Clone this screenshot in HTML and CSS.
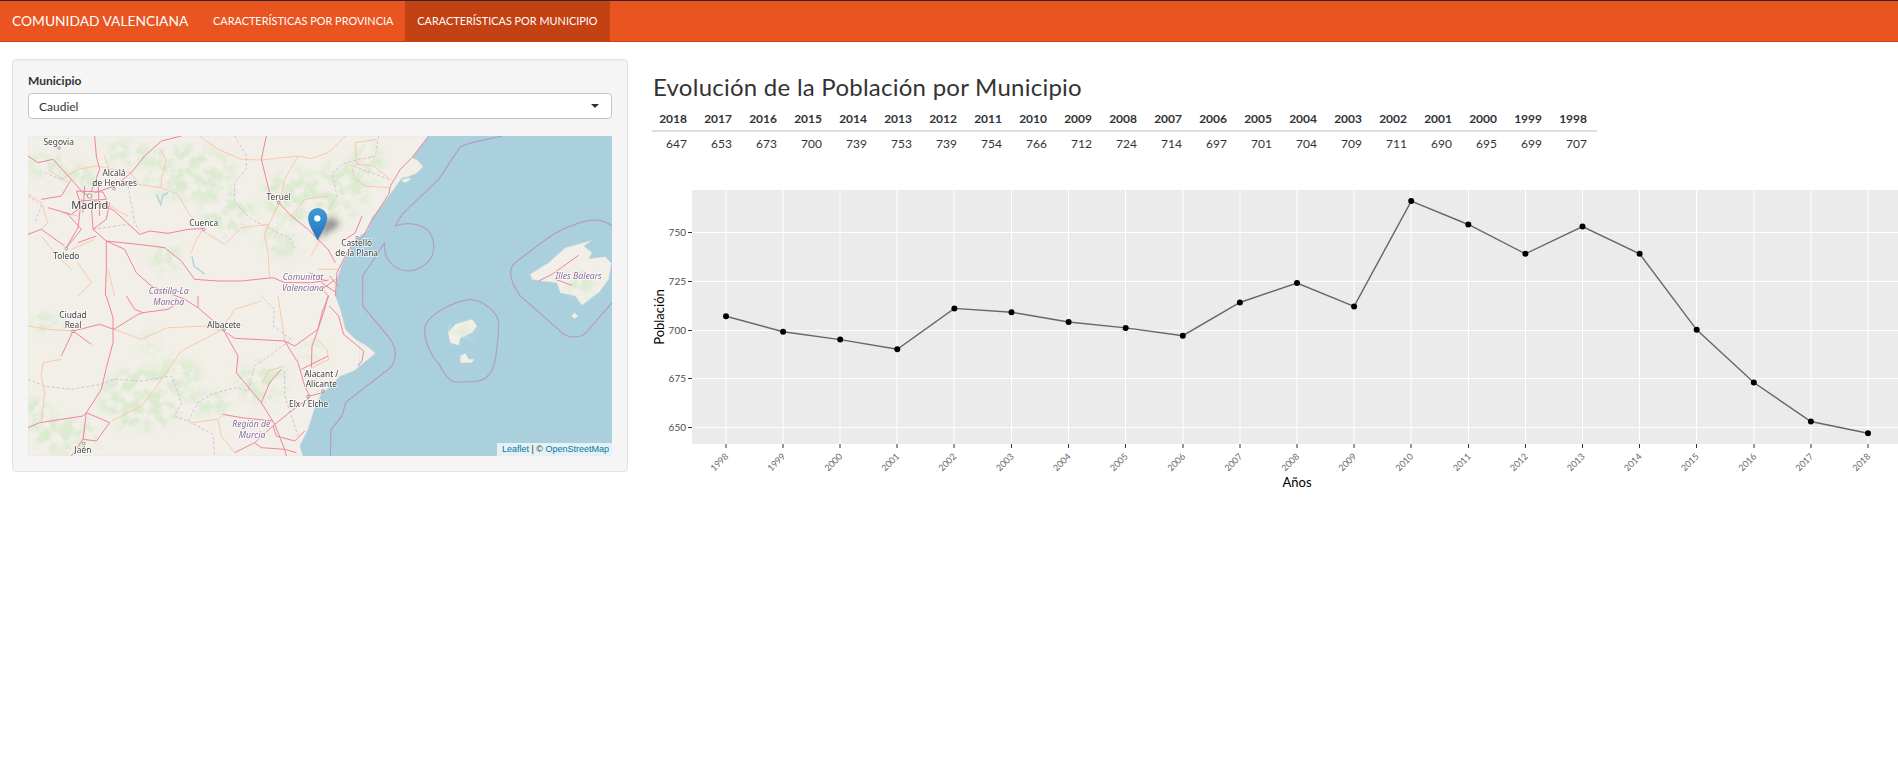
FILE: index.html
```html
<!DOCTYPE html>
<html lang="es">
<head>
  <meta charset="UTF-8" />
  <title>Comunidad Valenciana</title>
  <link rel="stylesheet" href="styles.css">
</head>
<body>
  <nav class="navbar">
    <span class="brand">COMUNIDAD VALENCIANA</span>
    <a class="nav-link" href="#">CARACTERÍSTICAS POR PROVINCIA</a>
    <a class="nav-link active" href="#">CARACTERÍSTICAS POR MUNICIPIO</a>
  </nav>

  <main class="content">
    <aside class="sidebar">
      <div class="well">
        <label class="field-label">Municipio</label>
        <div class="select-box"><span>Caudiel</span><i class="caret"></i></div>

        <div class="map">
          <svg class="map-svg" viewBox="0 0 1752 960" width="584" height="320" xmlns="http://www.w3.org/2000/svg">
            <defs>
              <filter id="mottle" x="-5%" y="-5%" width="110%" height="110%">
                <feGaussianBlur in="SourceGraphic" stdDeviation="14" result="base" />
                <feTurbulence type="fractalNoise" baseFrequency="0.03" numOctaves="3" seed="7" result="noise" />
                <feColorMatrix in="noise" type="matrix" values="0 0 0 0 0  0 0 0 0 0  0 0 0 0 0  4 0 0 0 -1.5" result="holes" />
                <feComposite in="base" in2="holes" operator="in" />
                <feGaussianBlur stdDeviation="2" />
              </filter>
              <filter id="tile" x="0" y="0" width="100%" height="100%"><feGaussianBlur stdDeviation="0.8" /></filter>
              <filter id="shadow" x="-100%" y="-100%" width="300%" height="300%"><feGaussianBlur stdDeviation="9" /></filter>
              <linearGradient id="pin" x1="0" y1="0" x2="0" y2="1">
                <stop offset="0" stop-color="#3f9ad8" />
                <stop offset="1" stop-color="#2376bd" />
              </linearGradient>
            </defs>
            <rect class="sea" width="1752" height="960" />
            <g filter="url(#tile)">
              <!-- mainland -->
              <path class="land" d="M0 0H1202L1182 25 1152 65 1168 72 1185 92 1165 112 1140 122 1122 125 1097 160 1072 195 1032 245 1017 285 982 310 962 345 942 385 927 430 922 480 937 520 952 580 982 610 1017 630 1042 652 1002 685 977 705 937 720 897 760 882 770 862 810 840 880 815 930 825 960H0Z" />
              <!-- islands -->
              <path class="land" d="M1507 415 1562 380 1612 335 1667 320 1692 312 1667 330 1692 350 1682 368 1732 362 1750 382 1742 430 1712 470 1697 480 1662 508 1642 480 1597 470 1587 440 1537 435 1512 430Z" />
              <path class="land" d="M1260 590 1282 565 1332 550 1347 570 1332 590 1297 605 1292 628 1267 620Z" />
              <path class="land" d="M1297 660 1312 652 1322 670 1340 670 1330 680 1297 680Z" />
              <path class="land" d="M1630 540 1640 530 1650 540 1640 548Z" />
              <path class="land" d="M1122 130 1142 126 1150 128 1136 138 1124 138Z" />

              <!-- green patches -->
              <g class="green" filter="url(#mottle)">
                <ellipse cx="480" cy="110" rx="140" ry="85" />
                <ellipse cx="600" cy="230" rx="80" ry="65" />
                <ellipse cx="160" cy="130" rx="50" ry="45" />
                <ellipse cx="800" cy="180" rx="100" ry="80" />
                <ellipse cx="940" cy="160" rx="80" ry="90" />
                <ellipse cx="1020" cy="80" rx="50" ry="60" />
                <ellipse cx="410" cy="360" rx="50" ry="50" />
                <ellipse cx="760" cy="320" rx="60" ry="50" />
                <ellipse cx="300" cy="50" rx="70" ry="35" />
                <ellipse cx="110" cy="900" rx="100" ry="55" />
                <ellipse cx="340" cy="790" rx="130" ry="100" />
                <ellipse cx="450" cy="720" rx="70" ry="55" />
                <ellipse cx="540" cy="800" rx="70" ry="40" />
                <ellipse cx="700" cy="740" rx="80" ry="60" />
                <ellipse cx="20" cy="830" rx="50" ry="50" />
                <ellipse cx="370" cy="620" rx="35" ry="30" />
                <ellipse cx="850" cy="650" rx="45" ry="30" />
                <ellipse cx="60" cy="560" rx="50" ry="30" />
                <ellipse cx="60" cy="90" rx="60" ry="40" />
                <ellipse cx="1660" cy="440" rx="50" ry="35" />
                <ellipse cx="1300" cy="585" rx="30" ry="18" />
              </g>

              <!-- lakes -->
              <path class="lake" d="M385 175 398 205 404 180 420 170" />
              <path class="lake" d="M492 360 498 390 530 415" />

              <!-- faint tile seams -->
              <path class="seam" d="M1040 632H1752M995 480V960" />

              <!-- regional boundaries -->
              <g class="boundary">
                <path d="M620 0 655 60 655 100 620 140 620 200 670 250 710 270 790 310 800 335" />
                <path d="M300 150 320 260 335 285M195 280 300 265 335 295" />
                <path d="M0 730 50 750 130 760 220 745 260 730 340 735 430 720 460 800 440 840 480 855 555 895 560 960" />
                <path d="M480 855 510 800 550 775 620 755 660 765 680 690 730 655 790 610" />
                <path d="M770 705 770 780 810 900M700 480 740 520 735 570 790 610" />
                <path d="M1052 0 1042 60 952 80 912 110 927 180 902 220" />
                <path d="M977 90 1082 130" />
                <path d="M0 180 40 210 20 260M50 110 100 130" />
              </g>

              <!-- secondary roads -->
              <g class="road-minor">
                <path d="M395 40 415 70 400 130 400 155 450 175 480 230 525 280 505 310 490 350" />
                <path d="M515 0 570 40 640 70 700 72 810 60 850 68 900 50 922 30 952 0" />
                <path d="M525 285 590 325 640 275 720 265 710 300 720 350 725 425" />
                <path d="M810 60 770 130 755 200 710 290" />
                <path d="M100 130 150 100 205 90 310 110 330 145 400 155" />
                <path d="M0 175 40 200 60 260 40 280M100 230 150 240M60 100 120 140M230 60 250 120M245 210 300 240" />
                <path d="M130 340 200 310M40 300 80 350 130 400M150 380 190 440 150 480M240 400 260 480" />
                <path d="M0 570 60 580 135 585" />
                <path d="M258 580 340 610 420 575 540 570 580 585" />
                <path d="M585 580 460 645 420 700 380 760 340 810 250 855" />
                <path d="M100 670 45 680 40 720 50 770 40 860" />
                <path d="M580 580 620 520 700 495" />
                <path d="M750 480 765 580 770 615" />
                <path d="M490 860 570 850 585 835M570 850 580 900 620 950" />
                <path d="M982 20 1047 10M972 90 977 125 1012 150 1082 155" />
                <path d="M982 20 987 85 1037 90 1087 130" />
                <path d="M702 740 722 705 770 690" />
                <path d="M867 610 897 640 902 670 852 695" />
                <path d="M790 240 830 190 900 180M870 400 930 400M850 360 880 300" />
              </g>

              <!-- motorways and trunk roads -->
              <g class="road">
                <path d="M0 60 30 80 75 70 130 130 165 170 185 180" />
                <path d="M200 0 205 60 215 100 190 165" />
                <path d="M460 0 400 15 350 60 310 110 260 150 200 170" />
                <path d="M190 190 260 225 335 295 365 285 420 292 480 280 525 278" />
                <path d="M190 210 195 280 235 315 330 325 410 335 460 375 500 430 570 435 640 435 735 425 770 440 850 440 902 432" />
                <path d="M235 315 235 400 232 480" />
                <path d="M235 315 290 340 325 410 370 450 470 490" />
                <path d="M160 190 150 275 115 335M40 280 0 295M40 280 110 330M115 230 160 280 115 335" />
                <path d="M130 130 100 180 40 190M165 210 130 235 60 215" />
                <path d="M145 165 225 168 235 190 155 195 145 165M170 150 165 230M210 140 215 240" />
                <path d="M195 280 235 250 245 200M150 320 205 300" />
                <path d="M715 0 700 70 725 170 752 200 790 240 840 280 900 340 922 380" />
                <path d="M1202 0 1152 65 1117 100 1087 150 1082 175 1027 260 1007 300 962 340 947 370 927 410 922 480" />
                <path d="M1002 240 982 290 952 310" />
                <path d="M922 430 882 460 902 480M845 410 895 435M880 440 925 470M905 420 930 450" />
                <path d="M902 480 882 530 867 590 852 630 850 695" />
                <path d="M904 510 932 540 947 595 1007 645 1002 675 990 690" />
                <path d="M235 480 255 545 255 620 235 695 220 760 175 830 165 910 205 915 245 860 175 830" />
                <path d="M165 910 130 960M0 875 35 860 165 840 175 830" />
                <path d="M135 585 215 565 258 580 330 535 345 530 420 520 470 490 510 515 585 580 630 660 625 710 700 800 740 865 770 940 775 960" />
                <path d="M135 585 100 660M135 585 190 625M295 480 320 520 345 530M510 480 510 515" />
                <path d="M595 590 620 607 770 615 800 630 870 580 890 520 900 480" />
                <path d="M770 615 810 680 830 750 845 780 885 770M820 700 880 670 900 660" />
                <path d="M700 800 725 740 760 700M740 865 790 825 845 785" />
                <path d="M735 870 745 900 800 915 830 885M620 950 680 920 700 935 770 940 805 950M680 920 740 865M585 835 640 845 735 855" />
                <path d="M1532 435 1572 415 1652 358M1582 430 1632 448" />
              </g>

              <!-- maritime limits -->
              <g class="maritime">
                <path d="M1422 0 1332 20 1297 32 1232 130 1122 235 1102 270C1120 262 1160 255 1197 280 1225 310 1225 360 1192 385 1160 412 1120 410 1092 385 1070 365 1068 340 1070 320L1004 420 1004 510 1067 585C1090 610 1102 630 1102 650 1102 670 1095 690 1087 695L954 798 942 840 909 880 907 960" />
                <path d="M1752 270C1720 245 1680 250 1642 265 1590 280 1552 310 1462 380 1445 395 1438 425 1477 480L1602 590C1620 605 1655 608 1672 592L1752 500" />
                <path d="M1327 490C1370 495 1412 530 1412 565 1412 620 1400 680 1397 690 1385 725 1360 735 1340 737L1282 738C1260 735 1240 700 1237 690 1210 660 1190 620 1190 580 1190 545 1270 495 1327 490Z" />
              </g>

              <!-- city dots -->
              <g class="city">
                <circle cx="93" cy="36" r="4" />
                <circle cx="258" cy="158" r="4" />
                <circle cx="185" cy="180" r="7" />
                <circle cx="752" cy="200" r="4" />
                <circle cx="527" cy="280" r="4" />
                <circle cx="115" cy="338" r="4" />
                <circle cx="135" cy="586" r="4" />
                <circle cx="588" cy="582" r="4" />
                <circle cx="885" cy="765" r="4" />
                <circle cx="840" cy="782" r="4" />
                <circle cx="167" cy="923" r="4" />
                <circle cx="987" cy="305" r="4" />
              </g>

              <!-- place names -->
              <g class="place">
                <text x="92" y="27">Segovia</text>
                <text x="258" y="120">Alcalá</text>
                <text x="260" y="150">de Henares</text>
                <text class="place-big" x="185" y="219">Madrid</text>
                <text x="752" y="191">Teruel</text>
                <text x="527" y="270">Cuenca</text>
                <text x="115" y="368">Toledo</text>
                <text x="135" y="547">Ciudad</text>
                <text x="135" y="577">Real</text>
                <text x="588" y="575">Albacete</text>
                <text x="880" y="724">Alacant /</text>
                <text x="880" y="753">Alicante</text>
                <text x="842" y="813">Elx / Elche</text>
                <text x="165" y="950">Jaén</text>
                <text x="986" y="329">Castelló</text>
                <text x="986" y="360">de la Plana</text>
              </g>
              <g class="region">
                <text x="422" y="473">Castilla-La</text>
                <text x="422" y="508">Mancha</text>
                <text x="825" y="432">Comunitat</text>
                <text x="825" y="466">Valenciana</text>
                <text x="670" y="873">Región de</text>
                <text x="672" y="907">Murcia</text>
                <text x="1652" y="428">Illes Balears</text>
              </g>

              <!-- marker -->
              <path class="pin-shadow" d="M872 308 895 245 925 250 935 268Z" filter="url(#shadow)" />
              <path d="M869 312C855 285 841 265 841 245A28 28 0 0 1 897 245C897 265 883 285 869 312Z" fill="url(#pin)" stroke="#2a6fa8" stroke-width="1" />
              <circle cx="868" cy="247" r="9.5" fill="#fff" />
            </g>
          </svg>
          <div class="attribution"><a href="#">Leaflet</a> | © <a href="#">OpenStreetMap</a></div>
        </div>
      </div>
    </aside>

    <section class="main-panel">
      <h3 class="title">Evolución de la Población por Municipio</h3>
      <table class="data-table">
        <thead>
          <tr><th>2018</th><th>2017</th><th>2016</th><th>2015</th><th>2014</th><th>2013</th><th>2012</th><th>2011</th><th>2010</th><th>2009</th><th>2008</th><th>2007</th><th>2006</th><th>2005</th><th>2004</th><th>2003</th><th>2002</th><th>2001</th><th>2000</th><th>1999</th><th>1998</th></tr>
        </thead>
        <tbody>
          <tr><td>647</td><td>653</td><td>673</td><td>700</td><td>739</td><td>753</td><td>739</td><td>754</td><td>766</td><td>712</td><td>724</td><td>714</td><td>697</td><td>701</td><td>704</td><td>709</td><td>711</td><td>690</td><td>695</td><td>699</td><td>707</td></tr>
        </tbody>
      </table>

      <svg class="chart" viewBox="652 165 1246 335" width="1246" height="335" xmlns="http://www.w3.org/2000/svg">
        <rect class="plot-bg" x="692" y="190" width="1206" height="254" />
        <g class="grid">
          <path d="M692 232.5H1898M692 281.5H1898M692 330.5H1898M692 378.5H1898M692 427.5H1898" />
          <path d="M726 190V444M783 190V444M840 190V444M897 190V444M954 190V444M1011.5 190V444M1068.5 190V444M1125.5 190V444M1183 190V444M1240 190V444M1297 190V444M1354 190V444M1411 190V444M1468.5 190V444M1525.5 190V444M1582.5 190V444M1639.5 190V444M1696.5 190V444M1754 190V444M1811 190V444M1868 190V444" />
        </g>
        <g class="ticks">
          <path d="M688 232.5H692M688 281.5H692M688 330.5H692M688 378.5H692M688 427.5H692" />
          <path d="M726 444V448M783 444V448M840 444V448M897 444V448M954 444V448M1011.5 444V448M1068.5 444V448M1125.5 444V448M1183 444V448M1240 444V448M1297 444V448M1354 444V448M1411 444V448M1468.5 444V448M1525.5 444V448M1582.5 444V448M1639.5 444V448M1696.5 444V448M1754 444V448M1811 444V448M1868 444V448" />
        </g>
        <g class="y-labels">
          <text x="686" y="236">750</text>
          <text x="686" y="285">725</text>
          <text x="686" y="334">700</text>
          <text x="686" y="382">675</text>
          <text x="686" y="431">650</text>
        </g>
        <g class="x-labels">
          <text x="729" y="457" transform="rotate(-45 729 457)">1998</text>
          <text x="786" y="457" transform="rotate(-45 786 457)">1999</text>
          <text x="843" y="457" transform="rotate(-45 843 457)">2000</text>
          <text x="900" y="457" transform="rotate(-45 900 457)">2001</text>
          <text x="957" y="457" transform="rotate(-45 957 457)">2002</text>
          <text x="1014.5" y="457" transform="rotate(-45 1014.5 457)">2003</text>
          <text x="1071.5" y="457" transform="rotate(-45 1071.5 457)">2004</text>
          <text x="1128.5" y="457" transform="rotate(-45 1128.5 457)">2005</text>
          <text x="1186" y="457" transform="rotate(-45 1186 457)">2006</text>
          <text x="1243" y="457" transform="rotate(-45 1243 457)">2007</text>
          <text x="1300" y="457" transform="rotate(-45 1300 457)">2008</text>
          <text x="1357" y="457" transform="rotate(-45 1357 457)">2009</text>
          <text x="1414" y="457" transform="rotate(-45 1414 457)">2010</text>
          <text x="1471.5" y="457" transform="rotate(-45 1471.5 457)">2011</text>
          <text x="1528.5" y="457" transform="rotate(-45 1528.5 457)">2012</text>
          <text x="1585.5" y="457" transform="rotate(-45 1585.5 457)">2013</text>
          <text x="1642.5" y="457" transform="rotate(-45 1642.5 457)">2014</text>
          <text x="1699.5" y="457" transform="rotate(-45 1699.5 457)">2015</text>
          <text x="1757" y="457" transform="rotate(-45 1757 457)">2016</text>
          <text x="1814" y="457" transform="rotate(-45 1814 457)">2017</text>
          <text x="1871" y="457" transform="rotate(-45 1871 457)">2018</text>
        </g>
        <polyline class="series" points="726,316.2 783.1,331.8 840.2,339.6 897.3,349.3 954.4,308.4 1011.5,312.3 1068.6,322 1125.7,327.9 1182.8,335.7 1239.9,302.5 1297,283 1354.1,306.4 1411.2,201.1 1468.3,224.5 1525.4,253.8 1582.5,226.5 1639.6,253.8 1696.7,329.8 1753.8,382.5 1810.9,421.5 1868,433.2" />
        <g class="dots">
          <circle cx="726" cy="316.2" r="3" /><circle cx="783.1" cy="331.8" r="3" /><circle cx="840.2" cy="339.6" r="3" /><circle cx="897.3" cy="349.3" r="3" /><circle cx="954.4" cy="308.4" r="3" /><circle cx="1011.5" cy="312.3" r="3" /><circle cx="1068.6" cy="322" r="3" /><circle cx="1125.7" cy="327.9" r="3" /><circle cx="1182.8" cy="335.7" r="3" /><circle cx="1239.9" cy="302.5" r="3" /><circle cx="1297" cy="283" r="3" /><circle cx="1354.1" cy="306.4" r="3" /><circle cx="1411.2" cy="201.1" r="3" /><circle cx="1468.3" cy="224.5" r="3" /><circle cx="1525.4" cy="253.8" r="3" /><circle cx="1582.5" cy="226.5" r="3" /><circle cx="1639.6" cy="253.8" r="3" /><circle cx="1696.7" cy="329.8" r="3" /><circle cx="1753.8" cy="382.5" r="3" /><circle cx="1810.9" cy="421.5" r="3" /><circle cx="1868" cy="433.2" r="3" />
        </g>
        <text class="axis-title" x="1297" y="487" text-anchor="middle">Años</text>
        <text class="axis-title" x="664" y="317" text-anchor="middle" transform="rotate(-90 664 317)">Población</text>
      </svg>
    </section>
  </main>
</body>
</html>
```

FILE: styles.css
```css
html, body { margin: 0; padding: 0; }
body {
  background: #fff;
  color: #333;
  font-family: Lato, 'Noto Sans', sans-serif;
  font-size: 12px;
  overflow-x: hidden;
}

/* navbar */
.navbar {
  display: flex;
  height: 40px;
  background: #e95420;
  border-top: 1px solid #2a2a2a;
  border-bottom: 1px solid #c34113;
  color: #fff;
}
.brand {
  width: 189px;
  padding-left: 12px;
  font-size: 13.8px;
  line-height: 40px;
  white-space: nowrap;
}
.nav-link {
  padding: 0 12px;
  color: #fff;
  font-size: 10.9px;
  line-height: 40px;
  text-decoration: none;
}
.nav-link.active { background: #c34113; }

/* layout */
.content { display: flex; }
.sidebar {
  flex: none;
  box-sizing: border-box;
  width: 640px;
  padding: 17px 12px 0;
}
.main-panel {
  flex: 1;
  min-width: 0;
  padding-left: 12px;
}

/* left panel */
.well {
  padding: 12px 15px 15px;
  background: #f5f5f5;
  border: 1px solid #e3e3e3;
  border-radius: 4px;
  box-shadow: inset 0 1px 1px rgba(0,0,0,.05);
}
.field-label {
  display: block;
  margin-bottom: 3px;
  font-weight: bold;
  line-height: 18px;
}
.select-box {
  display: flex;
  align-items: center;
  justify-content: space-between;
  box-sizing: border-box;
  height: 26px;
  padding: 0 12px 0 10px;
  background: #fff;
  border: 1px solid #c4c4c4;
  border-radius: 4px;
  color: #333;
}
.caret {
  width: 0;
  height: 0;
  border-style: solid;
  border-width: 4px 4px 0;
  border-color: #333 transparent transparent;
}

/* map */
.map {
  position: relative;
  margin-top: 17px;
  height: 320px;
  overflow: hidden;
}
.map-svg { display: block; }
.sea { fill: #aad0de; }
.land { fill: #f2efe9; stroke: #dcdccb; stroke-width: 1; }
.green { fill: #dcebd0; }
.lake { fill: none; stroke: #aad3df; stroke-width: 4; }
.seam { fill: none; stroke: #b6d6d8; stroke-width: 1; }
.boundary { fill: none; stroke: #d9bfdc; stroke-width: 3; stroke-dasharray: 9 6; }
.road-minor { fill: none; stroke: #fbc8ac; stroke-width: 3; stroke-linejoin: round; }
.road { fill: none; stroke: #f0849e; stroke-width: 3; stroke-linejoin: round; }
.maritime { fill: none; stroke: #b49cc8; stroke-width: 3.6; stroke-linejoin: round; }
.city { fill: #f2efe9; stroke: #666; stroke-width: 1.6; }
.place text, .region text {
  font-family: 'Noto Sans', sans-serif;
  text-anchor: middle;
  paint-order: stroke;
  stroke: rgba(255,255,255,.75);
  stroke-width: 5px;
}
.place text { fill: #3e3e3e; font-size: 25px; }
.place .place-big { font-size: 33px; }
.region text { fill: #8a6a98; font-size: 26px; font-style: italic; }
.pin-shadow { fill: #222; opacity: .45; }
.attribution {
  position: absolute;
  right: 0;
  bottom: 0;
  padding: 0 3px 0 5px;
  background: rgba(255,255,255,.7);
  color: #333;
  font-family: 'Liberation Sans', sans-serif;
  font-size: 9px;
  line-height: 13px;
}
.attribution a { color: #0078a8; text-decoration: none; }

/* right panel */
.title {
  margin: 32px 0 7px 1px;
  color: #333;
  font-size: 24px;
  font-weight: normal;
  letter-spacing: .25px;
  line-height: 26px;
}
.data-table {
  width: 945px;
  border-collapse: collapse;
  table-layout: fixed;
  margin-bottom: 9px;
}
.data-table th, .data-table td {
  padding: 3px 10px 4px 0;
  text-align: right;
  font-size: 12px;
  line-height: 17px;
}
.data-table th { padding-bottom: 3px; border-bottom: 2px solid #ddd; }

/* chart */
.chart { display: block; }
.plot-bg { fill: #ebebeb; }
.grid { fill: none; stroke: #fff; stroke-width: 1; }
.ticks { fill: none; stroke: #333; stroke-width: 1; }
.y-labels text { fill: #4d4d4d; font-size: 10px; text-anchor: end; }
.x-labels text { fill: #6a6a6a; font-size: 9px; text-anchor: end; }
.series { fill: none; stroke: #666; stroke-width: 1.4; }
.dots { fill: #000; }
.axis-title { fill: #000; font-size: 13px; }
```
